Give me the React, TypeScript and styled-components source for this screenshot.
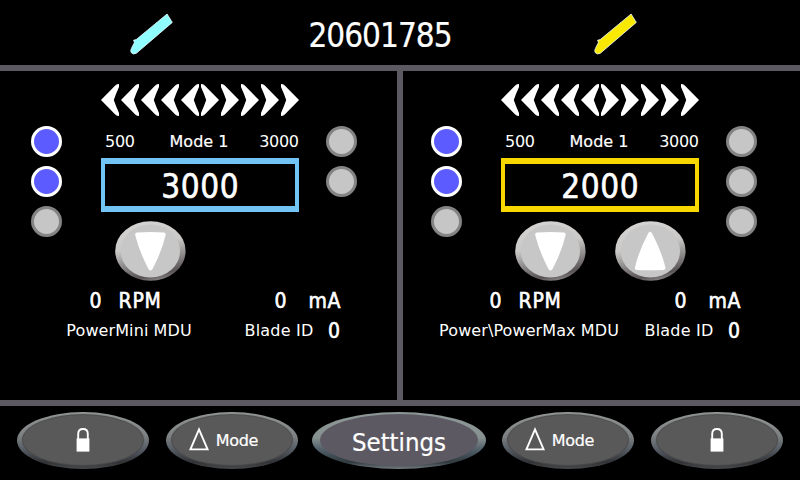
import React from "react";
import styled, { createGlobalStyle } from "styled-components";

const GlobalStyle = createGlobalStyle`
  * { box-sizing: border-box; }
  body { margin: 0; background: #000; }
  button { border: 0; padding: 0; margin: 0; background: none; color: inherit; font: inherit; }
  svg { display: block; }
`;

const LINE = "#5c5963";

const Screen = styled.div`
  width: 800px;
  height: 480px;
  display: grid;
  grid-template-rows: 65px 6px 329px 6px 74px;
  background: #000;
  color: #fff;
  font-family: "DejaVu Sans Condensed", "DejaVu Sans", sans-serif;
  font-stretch: condensed;
  overflow: hidden;
`;

const Bar = styled.div`
  background: ${LINE};
`;

const Header = styled.header`
  display: grid;
  grid-template-columns: 48px 416px 48px;
  padding: 12px 0 0 128px;
`;

const Pen = styled.svg`
  width: 48px;
  height: 46px;
`;

const Serial = styled.div`
  text-align: center;
  padding-right: 7px;
  line-height: 47px;
`;

const Text = styled.span<{ $size: number; $track?: number; $bold?: number }>`
  font-size: ${(p) => p.$size}px;
  letter-spacing: ${(p) => p.$track ?? 0}px;
  margin-right: ${(p) => -(p.$track ?? 0)}px;
  -webkit-text-stroke: ${(p) => p.$bold ?? 0}px #fff;
  white-space: nowrap;
`;

const Caption = styled(Text)`
  font-family: "DejaVu Sans", sans-serif;
  font-stretch: normal;
`;

const Panels = styled.main`
  display: grid;
  grid-template-columns: 400px 400px;
`;

const Panel = styled.section<{ $side: "left" | "right" }>`
  border-style: solid;
  border-color: ${LINE};
  border-width: ${(p) => (p.$side === "left" ? "0 3px 0 0" : "0 0 0 3px")};
`;

const PanelBody = styled.div<{ $side: "left" | "right" }>`
  width: 400px;
  margin-left: ${(p) => (p.$side === "left" ? 0 : -3)}px;
  padding-top: 13px;
`;

const Chevrons = styled.svg`
  width: 198px;
  height: 32px;
  margin-left: 101px;
`;

const Controls = styled.div`
  display: grid;
  grid-template-columns: 31px 198px 31px;
  column-gap: 39px;
  height: 155px;
  margin: 10px 0 0 31px;

  & > :last-child { margin-left: -12px; }
`;

const Leds = styled.div`
  display: flex;
  flex-direction: column;
  gap: 9px;
`;

const Led = styled.span<{ $on: boolean }>`
  width: 31px;
  height: 31px;
  border-radius: 50%;
  border: 3px solid ${(p) => (p.$on ? "#fff" : "#848484")};
  background: ${(p) => (p.$on ? "#5b5bff" : "#c6c6c6")};
`;

const Range = styled.div`
  display: grid;
  grid-template-columns: 65px 66px 67px;
  height: 32px;
  line-height: 31px;
  text-align: center;

  & > :first-child { text-align: left; padding-left: 4px; }
  & > :last-child { text-align: right; }
`;

const Value = styled.div<{ $color: string }>`
  height: 54px;
  border: solid ${(p) => p.$color};
  border-width: 6px 4px;
  text-align: center;
  line-height: 45px;
`;

const Arrows = styled.div`
  display: flex;
  gap: 29px;
  padding: 9px 0 0 14px;
`;

const ArrowButton = styled.button`
  width: 71px;
  height: 60px;
`;

const Readout = styled.div`
  display: grid;
  grid-template-columns: 29px 156px 34px 60px;
  padding-left: 89.5px;
  height: 38px;
  line-height: 40px;
`;

const Device = styled.div`
  display: grid;
  grid-template-columns: 200px 84px 30px;
  padding-left: 29px;
  height: 22px;
  line-height: 23px;

  & > :first-child { text-align: center; }
  & > :nth-child(2) { padding-left: 15.5px; }
  & > :nth-child(3) { padding-left: 15px; line-height: 24px; }
`;

const Footer = styled.footer`
  display: flex;
  gap: 17px;
  padding: 6px 0 0 17px;
`;

const PillButton = styled.button<{ $wide?: boolean }>`
  flex: none;
  width: ${(p) => (p.$wide ? 174 : 132)}px;
  height: 57px;
  margin: 0 ${(p) => (p.$wide ? "-1px 0 -3px" : "0")};
  padding: ${(p) => (p.$wide ? "2px 8px 3px" : "3px 6px 4px")};
  border-radius: 50%;
  background: ${(p) =>
    p.$wide
      ? "linear-gradient(#8d9796 0%, #87918f 45%, #52606a 65%, #303a3e 88%, #747b80 100%)"
      : "linear-gradient(#959898 0%, #7d8182 42%, #565d65 65%, #303235 88%, #484a4c 100%)"};
`;

const PillFace = styled.span<{ $wide?: boolean }>`
  display: flex;
  align-items: center;
  justify-content: center;
  height: 100%;
  padding-top: ${(p) => (p.$wide ? 3 : 0)}px;
  border-radius: 50%;
  background: ${(p) => (p.$wide ? LINE : "#595959")};
  box-shadow: 0 0 1px 1px ${(p) => (p.$wide ? "transparent" : "#4a4a4a")};
`;

const ModeLabel = styled.span`
  display: flex;
  align-items: center;
  gap: 7px;
  margin-left: -17px;

  & > svg { margin-top: -2px; }
`;

function PenIcon({ color }: { color: string }) {
  return (
    <Pen viewBox="128 12 48 46">
      <path
        d="M167.1 14 L172.3 22.4 L136.4 53.2 Q133 55 131.2 52.6 Q130.2 50.5 131.4 48.4 L134.4 42.6 L133.6 40.2 L136.2 39.6 Z"
        fill={color}
        stroke="#e8fbfb"
        strokeWidth=".8"
        strokeLinejoin="round"
      />
    </Pen>
  );
}

const CHEVRON = "M0 16 L14.5 1.2 Q16 0 18 0 V3 Q14.8 10 12.8 16 Q14.8 22 18 29 V32 Q16 32 14.5 30.8 Z";

function DirectionRow() {
  const steps = [0, 20, 40, 60, 80];
  return (
    <Chevrons viewBox="0 0 198 32" fill="#fff">
      {steps.map((x) => (
        <path key={x} transform={`translate(${x} 0)`} d={CHEVRON} />
      ))}
      {steps.map((x) => (
        <path key={x} transform={`translate(${118 + x} 0) scale(-1 1)`} d={CHEVRON} />
      ))}
    </Chevrons>
  );
}

function Arrow({ up = false }: { up?: boolean }) {
  const id = up ? "rimUp" : "rimDown";
  return (
    <ArrowButton aria-label={up ? "Increase" : "Decrease"}>
      <svg width="71" height="60" viewBox="0 0 71 60">
        <defs>
          <linearGradient id={id} x1=".35" y1="0" x2=".6" y2="1">
            <stop offset="0" stopColor="#d6d3d3" />
            <stop offset=".4" stopColor="#cbc8c8" />
            <stop offset=".62" stopColor="#979494" />
            <stop offset=".9" stopColor="#595355" />
            <stop offset="1" stopColor="#8a8788" />
          </linearGradient>
        </defs>
        <ellipse cx="35.4" cy="30" rx="35.2" ry="29.8" fill={`url(#${id})`} />
        <ellipse cx="35.4" cy="30" rx="29.6" ry="26.6" fill="#c7c7c7" />
        <path
          transform={up ? "rotate(180 35.3 30.2)" : undefined}
          d="M22 11.5 Q35.5 10.6 49 11.5 Q51.2 11.8 50.6 14 Q47 30 37.4 48.2 Q35.5 51 33.6 48.2 Q24 30 20.2 14 Q19.8 11.8 22 11.5 Z"
          fill="#fff"
        />
      </svg>
    </ArrowButton>
  );
}

interface ChannelProps {
  side: "left" | "right";
  color: string;
  value: string;
  device: string;
  rightLeds: number;
  canIncrease?: boolean;
}

function Channel({ side, color, value, device, rightLeds, canIncrease }: ChannelProps) {
  return (
    <Panel $side={side}>
      <PanelBody $side={side}>
        <DirectionRow />
        <Controls>
          <Leds>
            <Led $on />
            <Led $on />
            <Led $on={false} />
          </Leds>
          <div>
            <Range>
              <Caption $size={16} $track={-0.3}>500</Caption>
              <Caption $size={16} $bold={0.2}>Mode 1</Caption>
              <Caption $size={16} $track={-0.3}>3000</Caption>
            </Range>
            <Value $color={color}>
              <Text $size={33} $track={0.6} $bold={0.6}>{value}</Text>
            </Value>
            <Arrows>
              <Arrow />
              {canIncrease && <Arrow up />}
            </Arrows>
          </div>
          <Leds>
            {Array.from({ length: rightLeds }, (_, i) => (
              <Led key={i} $on={false} />
            ))}
          </Leds>
        </Controls>
        <Readout>
          <Text $size={21} $bold={0.6}>0</Text>
          <Text $size={21} $bold={0.6} $track={0.8}>RPM</Text>
          <Text $size={21} $bold={0.6}>0</Text>
          <Text $size={21} $bold={0.6} $track={0.5}>mA</Text>
        </Readout>
        <Device>
          <Caption $size={16} $track={0.1}>{device}</Caption>
          <Caption $size={16} $track={0.2}>Blade ID</Caption>
          <Text $size={21} $bold={0.6}>0</Text>
        </Device>
      </PanelBody>
    </Panel>
  );
}

function LockButton() {
  return (
    <PillButton aria-label="Lock">
      <PillFace>
        <svg width="14" height="24" viewBox="0 0 14 24">
          <path d="M2.2 11 V6 Q2.2 1 7 1 Q11.8 1 11.8 6 V11" fill="none" stroke="#fff" strokeWidth="1.9" />
          <rect x=".6" y="10.4" width="12.8" height="13.2" fill="#fff" />
        </svg>
      </PillFace>
    </PillButton>
  );
}

function ModeButton() {
  return (
    <PillButton>
      <PillFace>
        <ModeLabel>
          <svg width="20" height="24" viewBox="0 0 20 24">
            <path d="M10 2.4 L18.6 22.4 H1.4 Z" fill="none" stroke="#fff" strokeWidth="1.9" />
          </svg>
          <Caption $size={16} $track={-0.3} $bold={0.2}>Mode</Caption>
        </ModeLabel>
      </PillFace>
    </PillButton>
  );
}

export default function App() {
  return (
    <>
      <GlobalStyle />
      <Screen>
        <Header>
          <PenIcon color="#8fffff" />
          <Serial>
            <Text $size={33} $track={-1} $bold={0.2}>20601785</Text>
          </Serial>
          <PenIcon color="#f9e800" />
        </Header>
        <Bar />
        <Panels>
          <Channel side="left" color="#72c4f4" value="3000" device="PowerMini MDU" rightLeds={2} />
          <Channel side="right" color="#f8d600" value="2000" device="Power\PowerMax MDU" rightLeds={3} canIncrease />
        </Panels>
        <Bar />
        <Footer>
          <LockButton />
          <ModeButton />
          <PillButton $wide>
            <PillFace $wide>
              <Text $size={25.5} $bold={0.2}>Settings</Text>
            </PillFace>
          </PillButton>
          <ModeButton />
          <LockButton />
        </Footer>
      </Screen>
    </>
  );
}
